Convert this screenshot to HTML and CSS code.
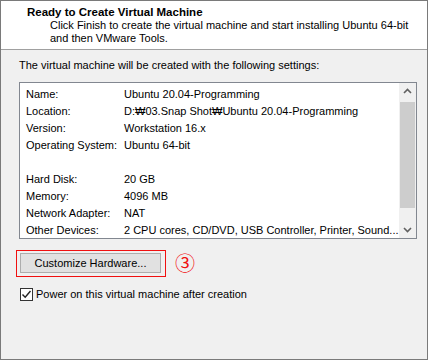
FILE: index.html
```html
<!DOCTYPE html>
<html lang="en">
  <head>
    <meta charset="UTF-8" />
    <title>New Virtual Machine Wizard</title>
    <link rel="stylesheet" href="styles.css">
  </head>
  <body>
    <div class="wizard">
      <div class="header">
        <div class="title">Ready to Create Virtual Machine</div>
        <div class="desc">Click Finish to create the virtual machine and start installing Ubuntu 64-bit and then VMware Tools.</div>
      </div>
      <div class="content">
        <div class="intro">The virtual machine will be created with the following settings:</div>
        <div class="listbox">
          <div class="rows">
            <span>Name:</span><span>Ubuntu 20.04-Programming</span>
            <span>Location:</span><span>D:&#8361;03.Snap Shot&#8361;Ubuntu 20.04-Programming</span>
            <span>Version:</span><span>Workstation 16.x</span>
            <span>Operating System:</span><span>Ubuntu 64-bit</span>
            <span></span><span></span>
            <span>Hard Disk:</span><span>20 GB</span>
            <span>Memory:</span><span>4096 MB</span>
            <span>Network Adapter:</span><span>NAT</span>
            <span>Other Devices:</span><span>2 CPU cores, CD/DVD, USB Controller, Printer, Sound...</span>
          </div>
          <div class="scrollbar">
            <svg class="arrow" width="17" height="17" viewBox="0 0 17 17"><path d="M5 10 L8.5 6.5 L12 10" fill="none" stroke="#606060" stroke-width="1.6"/></svg>
            <div class="thumb"></div>
            <svg class="arrow" width="17" height="17" viewBox="0 0 17 17"><path d="M5 7 L8.5 10.5 L12 7" fill="none" stroke="#606060" stroke-width="1.6"/></svg>
          </div>
        </div>
        <div class="button-row">
          <span class="mark"><button class="btn">Customize Hardware...</button></span>
          <span class="step">&#9314;</span>
        </div>
        <label class="check-row">
          <span class="checkbox">
            <svg width="11" height="11" viewBox="0 0 11 11"><path d="M1.5 5.5 L4.2 8.3 L9.5 2" fill="none" stroke="#222" stroke-width="1.4"/></svg>
          </span>
          Power on this virtual machine after creation
        </label>
      </div>
    </div>
  </body>
</html>
```
FILE: styles.css
```css
body {
  margin: 0;
  font-family: "Liberation Sans", "Noto Sans CJK KR", sans-serif;
  font-size: 11px;
  color: #000;
}
.wizard {
  width: 426px;
  height: 358px;
  border: 1px solid #7a7a7a;
  background-color: #f0f0f0;
  overflow: hidden;
}
.header {
  height: 44px;
  padding: 4px 0 0 26px;
  background-color: #fff;
  border-bottom: 1px solid #a0a0a0;
  box-sizing: content-box;
}
.title {
  font-weight: bold;
  font-size: 11.5px;
  line-height: 14px;
}
.desc {
  margin-left: 23px;
  width: 360px;
  line-height: 13px;
}
.content {
  padding: 8px 0 0 18px;
}
.intro {
  line-height: 15px;
}
.listbox {
  display: flex;
  width: 396px;
  height: 155px;
  margin-top: 9px;
  border: 1px solid #828790;
  background-color: #fff;
}
.rows {
  flex: 1;
  display: grid;
  grid-template-columns: 98px 1fr;
  grid-auto-rows: 17px;
  align-items: center;
  padding: 2px 0 0 6px;
  white-space: nowrap;
}
.scrollbar {
  width: 17px;
  display: flex;
  flex-direction: column;
  background-color: #f0f0f0;
}
.arrow {
  display: block;
}
.thumb {
  height: 106px;
  margin: 2px 1px 0;
  background-color: #cdcdcd;
  flex: none;
}
.scrollbar .arrow:last-child {
  margin-top: auto;
}
.button-row {
  display: flex;
  align-items: center;
  margin-top: 11px;
  margin-left: -3px;
}
.mark {
  display: inline-block;
  padding: 2px 4px 3px 3px;
  border: 1px solid #f01010;
}
.btn {
  display: block;
  width: 141px;
  height: 20px;
  padding: 0;
  border: 1px solid #adadad;
  background-color: #e1e1e1;
  font-family: inherit;
  font-size: 11px;
  color: #000;
}
.step {
  margin-left: 9px;
  color: #f01010;
  font-size: 20px;
  line-height: 20px;
}
.check-row {
  display: flex;
  align-items: center;
  gap: 3px;
  margin-top: 10px;
  margin-left: 1px;
  line-height: 15px;
}
.checkbox {
  width: 11px;
  height: 11px;
  border: 1px solid #333;
  background-color: #fff;
}
.checkbox svg {
  display: block;
}
```
